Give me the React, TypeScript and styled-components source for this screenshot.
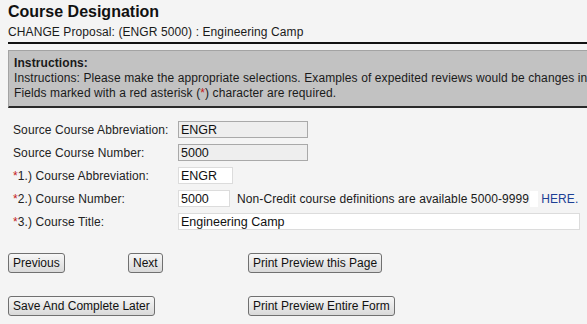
import React from 'react';
import styled, { createGlobalStyle } from 'styled-components';

const GlobalStyle = createGlobalStyle`
    html, body {
        margin: 0;
        background: #f4f4f4;
        overflow: hidden;
    }

    body {
        font-family: 'Liberation Sans', Arial, sans-serif;
        font-size: 12px;
        letter-spacing: 0.1px;
        color: #1a1a1a;
    }
`;

const Page = styled.div`
    padding: 2px 0 0 8px;
`;

const Title = styled.h1`
    font-size: 16px;
    line-height: 20px;
    font-weight: bold;
    letter-spacing: 0;
    color: #111;
    margin: 0;
`;

const SubTitle = styled.div`
    font-size: 12px;
    line-height: 14px;
    margin-top: 3px;
    padding-bottom: 3px;
    border-bottom: 2px solid #111;
`;

const Instructions = styled.div`
    margin-top: 6px;
    padding: 5px 0 5px 5px;
    background: #c2c2c2;
    border-top: 1px solid #a3a3a3;
    border-left: 1px solid #a3a3a3;
    border-bottom: 2px solid #2a2a2a;
    line-height: 15px;
    white-space: nowrap;
    overflow: hidden;
`;

const InstructionsHeading = styled.div`
    font-weight: bold;
`;

const Required = styled.span`
    color: #c42020;
`;

const Form = styled.div`
    display: grid;
    grid-template-columns: 165px 1fr;
    row-gap: 6px;
    align-items: center;
    margin-top: 13px;
    padding-left: 5px;
`;

const Label = styled.label`
    font-size: 12px;
    color: #222;
`;

const FieldCell = styled.div`
    display: flex;
    align-items: center;
    white-space: nowrap;
`;

const TextInput = styled.input<{ $width: number }>`
    box-sizing: border-box;
    width: ${props => props.$width}px;
    height: 17px;
    margin: 0;
    padding: 0 2px;
    font-family: 'Liberation Sans', Arial, sans-serif;
    font-size: 12.5px;
    color: #111;
    background: ${props => (props.readOnly ? '#eeeeee' : '#ffffff')};
    border: 1px solid ${props => (props.readOnly ? '#a9a9a9' : '#dcdcdc')};
    outline: none;
`;

const Note = styled.span`
    margin-left: 7px;
    color: #1a1a1a;
`;

const Spacer = styled.span`
    display: inline-block;
    width: 8px;
    height: 16px;
    background: #ffffff;
    margin: 0 3px 0 1px;
`;

const Link = styled.a`
    color: #1c3f94;
    text-decoration: none;
`;

const Buttons = styled.div`
    display: grid;
    grid-template-columns: 120px 120px auto;
    row-gap: 23px;
    justify-items: start;
    margin-top: 23px;
`;

const Button = styled.button<{ $col: number }>`
    grid-column: ${props => props.$col};
    height: 20px;
    padding: 0 4px;
    white-space: nowrap;
    font-family: 'Liberation Sans', Arial, sans-serif;
    font-size: 12px;
    color: #111;
    background: linear-gradient(#f7f7f7, #d9d9d9);
    border: 1px solid #707070;
    border-radius: 3px;
    cursor: pointer;
`;

const App: React.FC = () => (
    <>
        <GlobalStyle />
        <Page>
            <Title>Course Designation</Title>
            <SubTitle>CHANGE Proposal: (ENGR 5000) : Engineering Camp</SubTitle>

            <Instructions>
                <InstructionsHeading>Instructions:</InstructionsHeading>
                <div>
                    Instructions: Please make the appropriate selections. Examples of expedited reviews would be changes in
                    course title, description or prerequisites.
                </div>
                <div>
                    Fields marked with a red asterisk (<Required>*</Required>) character are required.
                </div>
            </Instructions>

            <Form>
                <Label>Source Course Abbreviation:</Label>
                <FieldCell>
                    <TextInput $width={130} readOnly defaultValue="ENGR" />
                </FieldCell>

                <Label>Source Course Number:</Label>
                <FieldCell>
                    <TextInput $width={130} readOnly defaultValue="5000" />
                </FieldCell>

                <Label>
                    <Required>*</Required>1.) Course Abbreviation:
                </Label>
                <FieldCell>
                    <TextInput $width={55} defaultValue="ENGR" />
                </FieldCell>

                <Label>
                    <Required>*</Required>2.) Course Number:
                </Label>
                <FieldCell>
                    <TextInput $width={52} defaultValue="5000" />
                    <Note>Non-Credit course definitions are available 5000-9999</Note>
                    <Spacer />
                    <Link href="#">HERE.</Link>
                </FieldCell>

                <Label>
                    <Required>*</Required>3.) Course Title:
                </Label>
                <FieldCell>
                    <TextInput $width={402} defaultValue="Engineering Camp" />
                </FieldCell>
            </Form>

            <Buttons>
                <Button $col={1}>Previous</Button>
                <Button $col={2}>Next</Button>
                <Button $col={3}>Print Preview this Page</Button>
                <Button $col={1}>Save And Complete Later</Button>
                <Button $col={3}>Print Preview Entire Form</Button>
            </Buttons>
        </Page>
    </>
);

export default App;
